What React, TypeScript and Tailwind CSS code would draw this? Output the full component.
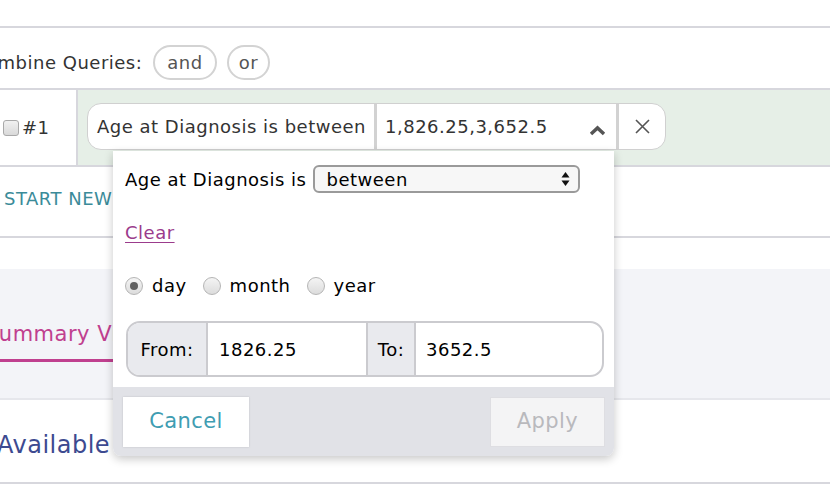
const Radio = ({ checked, label }: { checked?: boolean; label: string }) => (
  <label className="flex items-center gap-[9px]">
    <span className="w-[18px] h-[18px] rounded-full border border-[#b5b5b5] bg-gradient-to-b from-[#f4f4f4] to-[#dcdcdc] flex items-center justify-center">
      {checked && <span className="w-[8px] h-[8px] rounded-full bg-[#5f5f5f]"></span>}
    </span>
    <span>{label}</span>
  </label>
);

const QueryPopup = () => (
  <div className="absolute left-[113px] top-[151px] w-[501px] rounded-b-[8px] bg-white shadow-[0_3px_10px_rgba(0,0,0,0.22)] overflow-hidden text-[18px] text-black">
    <div className="px-[12px] pt-[14px] pb-[10px]">
      <div className="flex items-center gap-[7px]">
        <span>Age at Diagnosis is</span>
        <div className="w-[267px] h-[28px] border-2 border-[#9a9a9a] rounded-[6px] bg-[#f7f7f7] flex items-center justify-between pl-[11px] pr-[8px]">
          <span>between</span>
          <svg width="9" height="16" viewBox="0 0 9 16">
            <path d="M4.5 1 L8.5 6.5 L0.5 6.5 Z" fill="#111" />
            <path d="M4.5 15 L8.5 9.5 L0.5 9.5 Z" fill="#111" />
          </svg>
        </div>
      </div>
      <div className="mt-[26px]">
        <a className="text-[#9b3b8c] underline underline-offset-[3px]">Clear</a>
      </div>
      <div className="mt-[26px] flex items-center gap-[16px]">
        <Radio checked label="day" />
        <Radio label="month" />
        <Radio label="year" />
      </div>
      <div className="mt-[22px] ml-[1px] mr-[-2px] h-[56px] flex border-2 border-[#cbcbcf] rounded-[14px] overflow-hidden">
        <div className="w-[80px] bg-[#e9eaee] border-r-2 border-[#cbcbcf] flex items-center justify-center">From:</div>
        <div className="w-[158px] flex items-center pl-[11px]">1826.25</div>
        <div className="w-[50px] bg-[#e9eaee] border-x-2 border-[#cbcbcf] flex items-center justify-center">To:</div>
        <div className="flex-1 flex items-center pl-[10px]">3652.5</div>
      </div>
    </div>
    <div className="bg-[#e1e2e7] h-[69px] flex items-center justify-between pl-[10px] pr-[9px]">
      <button className="w-[126px] h-[50px] bg-white shadow-[0_0_2px_rgba(0,0,0,0.15)] text-[#3f9db2] text-[21px] tracking-[0.4px]">Cancel</button>
      <button className="w-[115px] h-[50px] bg-[#f4f4f5] border border-[#dedee2] text-[#b9b9bd] text-[21px] tracking-[0.4px]">Apply</button>
    </div>
  </div>
);

const App = () => {
  return (
    <div className="relative w-[830px] h-[486px] overflow-hidden bg-white text-[#333] font-['DejaVu_Sans',sans-serif] text-[18px] tracking-[0.5px]">
      <div className="h-[26px]"></div>
      <div className="h-[62px] border-t-2 border-[#d7d7dd] flex items-center gap-[10px] pt-[8px]">
        <span className="ml-[-27px]">Combine Queries:</span>
        <span className="ml-[1px] h-[35px] px-[12px] rounded-full border-2 border-[#d3d3d3] flex items-center text-[#555]">and</span>
        <span className="h-[35px] px-[10px] rounded-full border-2 border-[#d3d3d3] flex items-center text-[#555]">or</span>
      </div>
      <div className="h-[79px] border-y-2 border-[#d7d7dd] flex">
        <div className="w-[78px] border-r-2 border-[#d7d7dd] flex items-center pl-[3px] gap-[3px]">
          <span className="w-[16px] h-[16px] rounded-[3px] border border-[#a9a9a9] bg-gradient-to-b from-[#f1f1f1] to-[#d9d9d9]"></span>
          <span>#1</span>
        </div>
        <div className="flex-1 bg-[#e6efe7] flex items-start pt-[13px] pl-[9px]">
          <div className="h-[47px] flex border border-[#d0d0d0] rounded-[14px] overflow-hidden bg-white">
            <div className="w-[289px] flex items-center pl-[9px] border-r-[3px] border-[#d2d2d2] whitespace-nowrap">Age at Diagnosis is between</div>
            <div className="w-[239px] flex items-center justify-between pl-[8px] pr-[10px]">
              <span>1,826.25,3,652.5</span>
              <svg width="17" height="11" viewBox="0 0 17 11" className="mt-[8px]">
                <polyline points="2,9 8.5,3 15,9" fill="none" stroke="#555" strokeWidth="3.5" strokeLinejoin="miter" />
              </svg>
            </div>
            <div className="w-[49px] border-l-[3px] border-[#d2d2d2] flex items-center justify-center">
              <svg width="15" height="15" viewBox="0 0 15 15">
                <path d="M1 1 L14 14 M14 1 L1 14" stroke="#555" strokeWidth="1.6" />
              </svg>
            </div>
          </div>
        </div>
      </div>
      <div className="h-[69px] flex items-center pl-[4px] pb-[6px] text-[#3b8b99]">START NEW QUERY</div>
      <div className="h-[33px] border-t-2 border-[#d7d7dd]"></div>
      <div className="h-[131px] bg-[#f3f4f8] border-b-2 border-[#e6e7ec] pt-[50px]">
        <div className="inline-block ml-[-15px] text-[#c0408f] text-[21px] pb-[8px] border-b-[3px] border-[#c0408f] pr-[10px]">Summary View</div>
      </div>
      <div className="h-[84px] border-b-2 border-[#d7d7dd] flex items-center pt-[8px]">
        <span className="ml-[-3px] text-[#3d4a90] text-[24px]">Available</span>
      </div>
      <QueryPopup />
    </div>
  );
};

export default App;
